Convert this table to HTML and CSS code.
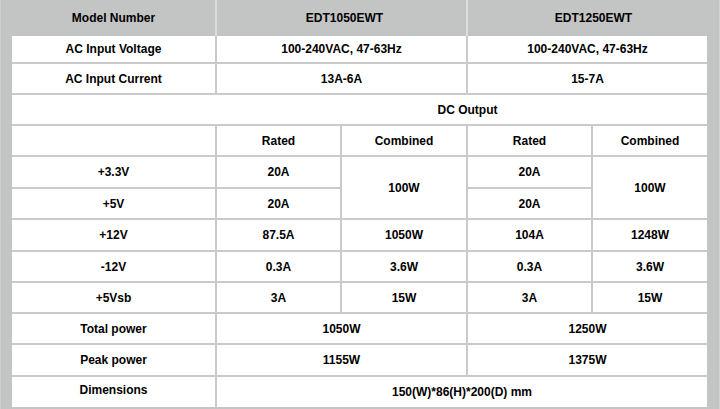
FILE: index.html
```html
<!DOCTYPE html>
<html>
<head>
<meta charset="utf-8">
<link rel="stylesheet" href="styles.css">
</head>
<body>
<div class="frame">
  <table class="spec">
    <colgroup>
      <col class="c1"><col class="c2"><col class="c3"><col class="c4"><col class="c5">
    </colgroup>
    <thead>
      <tr class="hrow">
        <th>Model Number</th>
        <th colspan="2" class="h2">EDT1050EWT</th>
        <th colspan="2" class="h3">EDT1250EWT</th>
      </tr>
    </thead>
    <tbody>
      <tr class="r27">
        <td>AC Input Voltage</td>
        <td colspan="2">100-240VAC, 47-63Hz</td>
        <td colspan="2">100-240VAC, 47-63Hz</td>
      </tr>
      <tr class="r31">
        <td>AC Input Current</td>
        <td colspan="2">13A-6A</td>
        <td colspan="2">15-7A</td>
      </tr>
      <tr class="r31">
        <td colspan="5" class="dc">DC Output</td>
      </tr>
      <tr class="r31">
        <td></td>
        <td>Rated</td>
        <td>Combined</td>
        <td>Rated</td>
        <td>Combined</td>
      </tr>
      <tr class="r32">
        <td>+3.3V</td>
        <td>20A</td>
        <td rowspan="2">100W</td>
        <td>20A</td>
        <td rowspan="2">100W</td>
      </tr>
      <tr class="r31">
        <td>+5V</td>
        <td>20A</td>
        <td>20A</td>
      </tr>
      <tr class="r32">
        <td>+12V</td>
        <td>87.5A</td>
        <td>1050W</td>
        <td>104A</td>
        <td>1248W</td>
      </tr>
      <tr class="r31">
        <td>-12V</td>
        <td>0.3A</td>
        <td>3.6W</td>
        <td>0.3A</td>
        <td>3.6W</td>
      </tr>
      <tr class="r31">
        <td>+5Vsb</td>
        <td>3A</td>
        <td>15W</td>
        <td>3A</td>
        <td>15W</td>
      </tr>
      <tr class="r31">
        <td>Total power</td>
        <td colspan="2">1050W</td>
        <td colspan="2">1250W</td>
      </tr>
      <tr class="r32">
        <td>Peak power</td>
        <td colspan="2">1155W</td>
        <td colspan="2">1375W</td>
      </tr>
      <tr class="r31">
        <td class="dim">Dimensions</td>
        <td colspan="4">150(W)*86(H)*200(D) mm</td>
      </tr>
    </tbody>
  </table>
</div>
</body>
</html>
```

FILE: styles.css
```css
html, body {
  margin: 0;
  padding: 0;
  background: #c3c4c4;
}

.frame {
  width: 720px;
  height: 409px;
  box-sizing: border-box;
  padding: 0 13px 2px 12px;
  background: #c3c4c4;
  border-left: 1px solid #cfd0d0;
  border-right: 1px solid #d3d4d4;
  overflow: hidden;
}

.spec {
  width: 695px;
  margin-left: -1px;
  border-collapse: collapse;
  table-layout: fixed;
  font-family: "Liberation Sans", Arial, sans-serif;
  font-size: 12px;
  font-weight: bold;
  color: #000000;
  text-align: center;
}

.c1 { width: 204px; }
.c2 { width: 125px; }
.c3 { width: 126px; }
.c4 { width: 125px; }
.c5 { width: 115px; }

.spec th {
  height: 36px;
  padding: 0;
  background: transparent;
  border-left: 2px solid #dcdddd;
  border-bottom: 0;
  font-weight: bold;
  box-sizing: border-box;
}

.spec th:first-child { border-left: 0; }
.spec .h2 { padding-left: 6px; }
.spec .h3 { padding-left: 12px; }

.spec td {
  padding: 0;
  background: #ffffff;
  border: 2px solid #c9caca;
  box-sizing: border-box;
  vertical-align: middle;
}

.spec tbody tr:first-child td { border-top: 0; }
.spec tr td:first-child { border-left: 0; }
.spec tr td:last-child { border-right: 0; }
.spec tbody tr:last-child td { border-bottom: 0; }

.r27 td { height: 27px; }
.r31 td { height: 31px; }
.r32 td { height: 32px; }

.spec .dc { padding-left: 216px; }
.spec .dim { padding-bottom: 5px; }
```
